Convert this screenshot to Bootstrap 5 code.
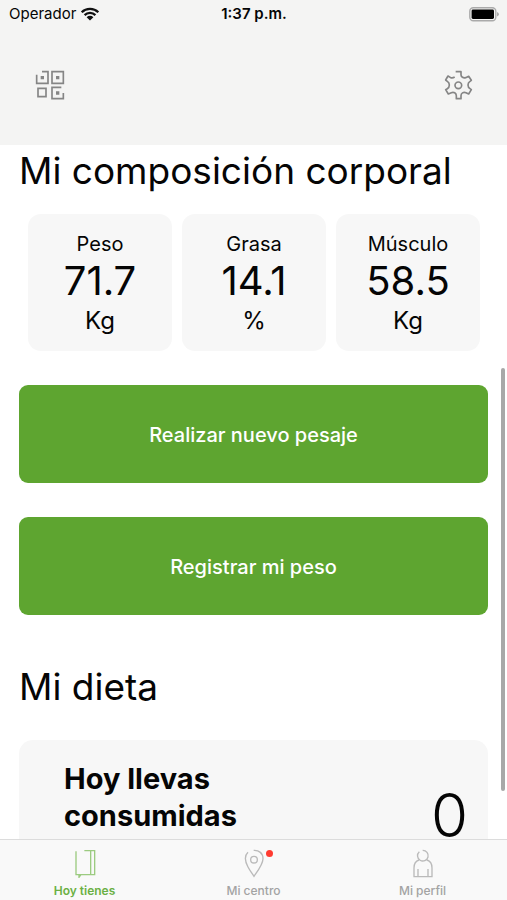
<!DOCTYPE html>
<html lang="es">
<head>
<meta charset="utf-8">
<meta name="viewport" content="width=device-width, initial-scale=1">
<title>Hoy tienes</title>
<link href="https://cdn.jsdelivr.net/npm/bootstrap@5.3.0/dist/css/bootstrap.min.css" rel="stylesheet">
<style>
  body { font-family: Inter, "Liberation Sans", sans-serif; color: #050505; background: #fff; }
  svg { display: block; fill: none; }
  .top-area { background: #f4f4f3; height: 145px; }
  .status { height: 28px; font-size: 15px; line-height: 28px; padding: 0 8px 0 9px; }
  .toolbar { padding: 42px 34px 0 35px; }
  .icon-btn { color: #858585; }
  .content { padding: 0 19px; min-height: 0; }
  .screen-title { font-size: 37px; line-height: 52px; font-weight: 400; }
  .metrics { padding: 17px 8px 0 9px; gap: 10px; }
  .metric { background: #f7f7f7; border-radius: 13px; padding: 16px 0 14px; }
  .metric-name { font-size: 20px; line-height: 28px; }
  .metric-value { font-size: 40px; line-height: 46px; }
  .metric-unit { font-size: 24px; line-height: 33px; }
  .action { background: #5ea530; color: #fff; height: 98px; border-radius: 9px; font-size: 20px; font-weight: 500; margin-top: 34px; padding: 8px 12px 6px; }
  .action:hover { background: #52932a; color: #fff; }
  .diet-title { margin-top: 46px; }
  .diet { background: #f7f7f7; border-radius: 14px; margin-top: 27px; padding: 20px 20px 20px 45px; height: 160px; }
  .diet-label { font-size: 29px; line-height: 37px; font-weight: 700; }
  .diet-count { font-size: 60px; line-height: 44px; font-weight: 300; padding-top: 33px; }
  .scroll-thumb { right: 2px; top: 223px; width: 4px; height: 423px; border-radius: 2px; background: #a8a8a8; }
  .tabs { background: #f9f9f9; border-top: 1px solid #dcdcdc; height: 61px; }
  .tab { color: #a3a3a3; font-size: 12px; line-height: 16px; font-weight: 500; padding-top: 8px; gap: 5px; }
  .tab svg { stroke: #bababa; }
  .tab.active { color: #6bb044; font-weight: 600; }
  .tab.active svg { stroke: #9ccb80; }
  .alert-dot { width: 7px; height: 7px; background: #ff3b30; left: 24px; top: 2px; }
</style>
<script src="https://cdn.jsdelivr.net/npm/bootstrap@5.3.0/dist/js/bootstrap.bundle.min.js"></script>
</head>
<body class="d-flex flex-column vh-100 overflow-hidden">
<header class="top-area flex-shrink-0">
  <div class="status row g-0">
    <div class="col d-flex align-items-center gap-1">
      <span>Operador</span>
      <svg width="20" height="16" viewBox="0 0 20 16" aria-hidden="true">
        <path d="M1.700 6.200a11.800 11.800 0 0 1 16.600 0M4.600 9.100a7.700 7.700 0 0 1 10.800 0" stroke="#111" stroke-width="2.300"/>
        <path d="M6.600 11.200a4.900 4.900 0 0 1 6.800 0L10 14.600z" fill="#111"/>
      </svg>
    </div>
    <div class="col-auto fw-semibold">1:37 p.m.</div>
    <div class="col d-flex align-items-center justify-content-end">
      <svg width="30" height="15" viewBox="0 0 30 15" aria-label="Batería">
        <rect x=".8" y=".8" width="26" height="13" rx="3.5" stroke="#aaa" stroke-width="1.4"/>
        <rect x="2.6" y="2.6" width="22.4" height="9.4" rx="1.4" fill="#000"/>
        <path d="M28 5v4.6q2-1 2-2.3T28 5z" fill="#aaa"/>
      </svg>
    </div>
  </div>
  <div class="toolbar d-flex justify-content-between">
    <button type="button" class="icon-btn btn p-0 border-0" aria-label="Código QR">
      <svg width="30" height="30" viewBox="0 0 90 90" stroke="currentColor" stroke-width="5">
        <path d="M5 14v26h34V5H21M51 5h34v35H51zM9 55h24v25H9zM85 69v17H51V52h28"/>
        <path d="M17 18h10v10H17zM63 18h10v10H63zM63 64h10v10H63z" fill="currentColor" stroke="none"/>
      </svg>
    </button>
    <button type="button" class="icon-btn btn p-0 border-0" aria-label="Ajustes">
      <svg width="29" height="30" viewBox="571 211 87 90" stroke="currentColor" stroke-width="5" stroke-linejoin="round">
        <path d="M606 216h16v9c0 7 7 11 14 9l9-4 8 12-4 3c-8 5-8 17 0 22l4 3-8 13-8-4c-8-3-15 2-15 9v9h-14v-9c0-8-8-12-15-9l-9 4-8-13 5-3c8-5 8-17 0-22l-5-4 7-12 8 5q6 2 12-2"/>
        <circle cx="614" cy="257" r="10"/>
      </svg>
    </button>
  </div>
</header>

<main class="content flex-grow-1 overflow-hidden position-relative">
  <h1 class="screen-title m-0 text-nowrap">Mi composición corporal</h1>
  <div class="metrics d-flex text-center">
    <div class="metric flex-fill w-100">
      <div class="metric-name">Peso</div>
      <div class="metric-value">71.7</div>
      <div class="metric-unit">Kg</div>
    </div>
    <div class="metric flex-fill w-100">
      <div class="metric-name">Grasa</div>
      <div class="metric-value">14.1</div>
      <div class="metric-unit">%</div>
    </div>
    <div class="metric flex-fill w-100">
      <div class="metric-name">Músculo</div>
      <div class="metric-value">58.5</div>
      <div class="metric-unit">Kg</div>
    </div>
  </div>
  <button type="button" class="action btn w-100 border-0">Realizar nuevo pesaje</button>
  <button type="button" class="action btn w-100 border-0">Registrar mi peso</button>
  <h2 class="screen-title diet-title mb-0">Mi dieta</h2>
  <section class="diet d-flex justify-content-between">
    <div class="diet-label">Hoy llevas<br>consumidas</div>
    <div class="diet-count">0</div>
  </section>
  <div class="scroll-thumb position-absolute"></div>
</main>

<nav class="tabs d-flex flex-shrink-0" aria-label="Principal">
  <a href="#hoy" class="tab active w-100 d-flex flex-column align-items-center text-decoration-none" aria-current="page">
    <svg width="24" height="30" viewBox="218 592 72 90" stroke-width="4">
      <path d="M227 602v70h56v-72h-31M271 600v72M236 672v8l6-8"/>
    </svg>
    <span>Hoy tienes</span>
  </a>
  <a href="#centro" class="tab w-100 d-flex flex-column align-items-center text-decoration-none">
    <span class="position-relative">
      <svg width="24" height="30" viewBox="33 22 72 90" stroke-width="4">
        <path d="M51 35c-13 12-8 29 0 44 7 13 14 22 18 28 8-12 27-36 27-53 0-16-12-26-28-25"/>
        <circle cx="69" cy="57" r="10"/>
      </svg>
      <span class="alert-dot position-absolute rounded-circle"></span>
    </span>
    <span>Mi centro</span>
  </a>
  <a href="#perfil" class="tab w-100 d-flex flex-column align-items-center text-decoration-none">
    <svg width="24" height="30" viewBox="32 22 72 90" stroke-width="4">
      <path d="M57 33a16 16 0 1 0 10-4M56 58c-10 3-15 12-15 24v26h54V82c0-12-5-21-15-24M53 108V85M83 108V85M58 58q10 6 20 0"/>
    </svg>
    <span>Mi perfil</span>
  </a>
</nav>
</body>
</html>
